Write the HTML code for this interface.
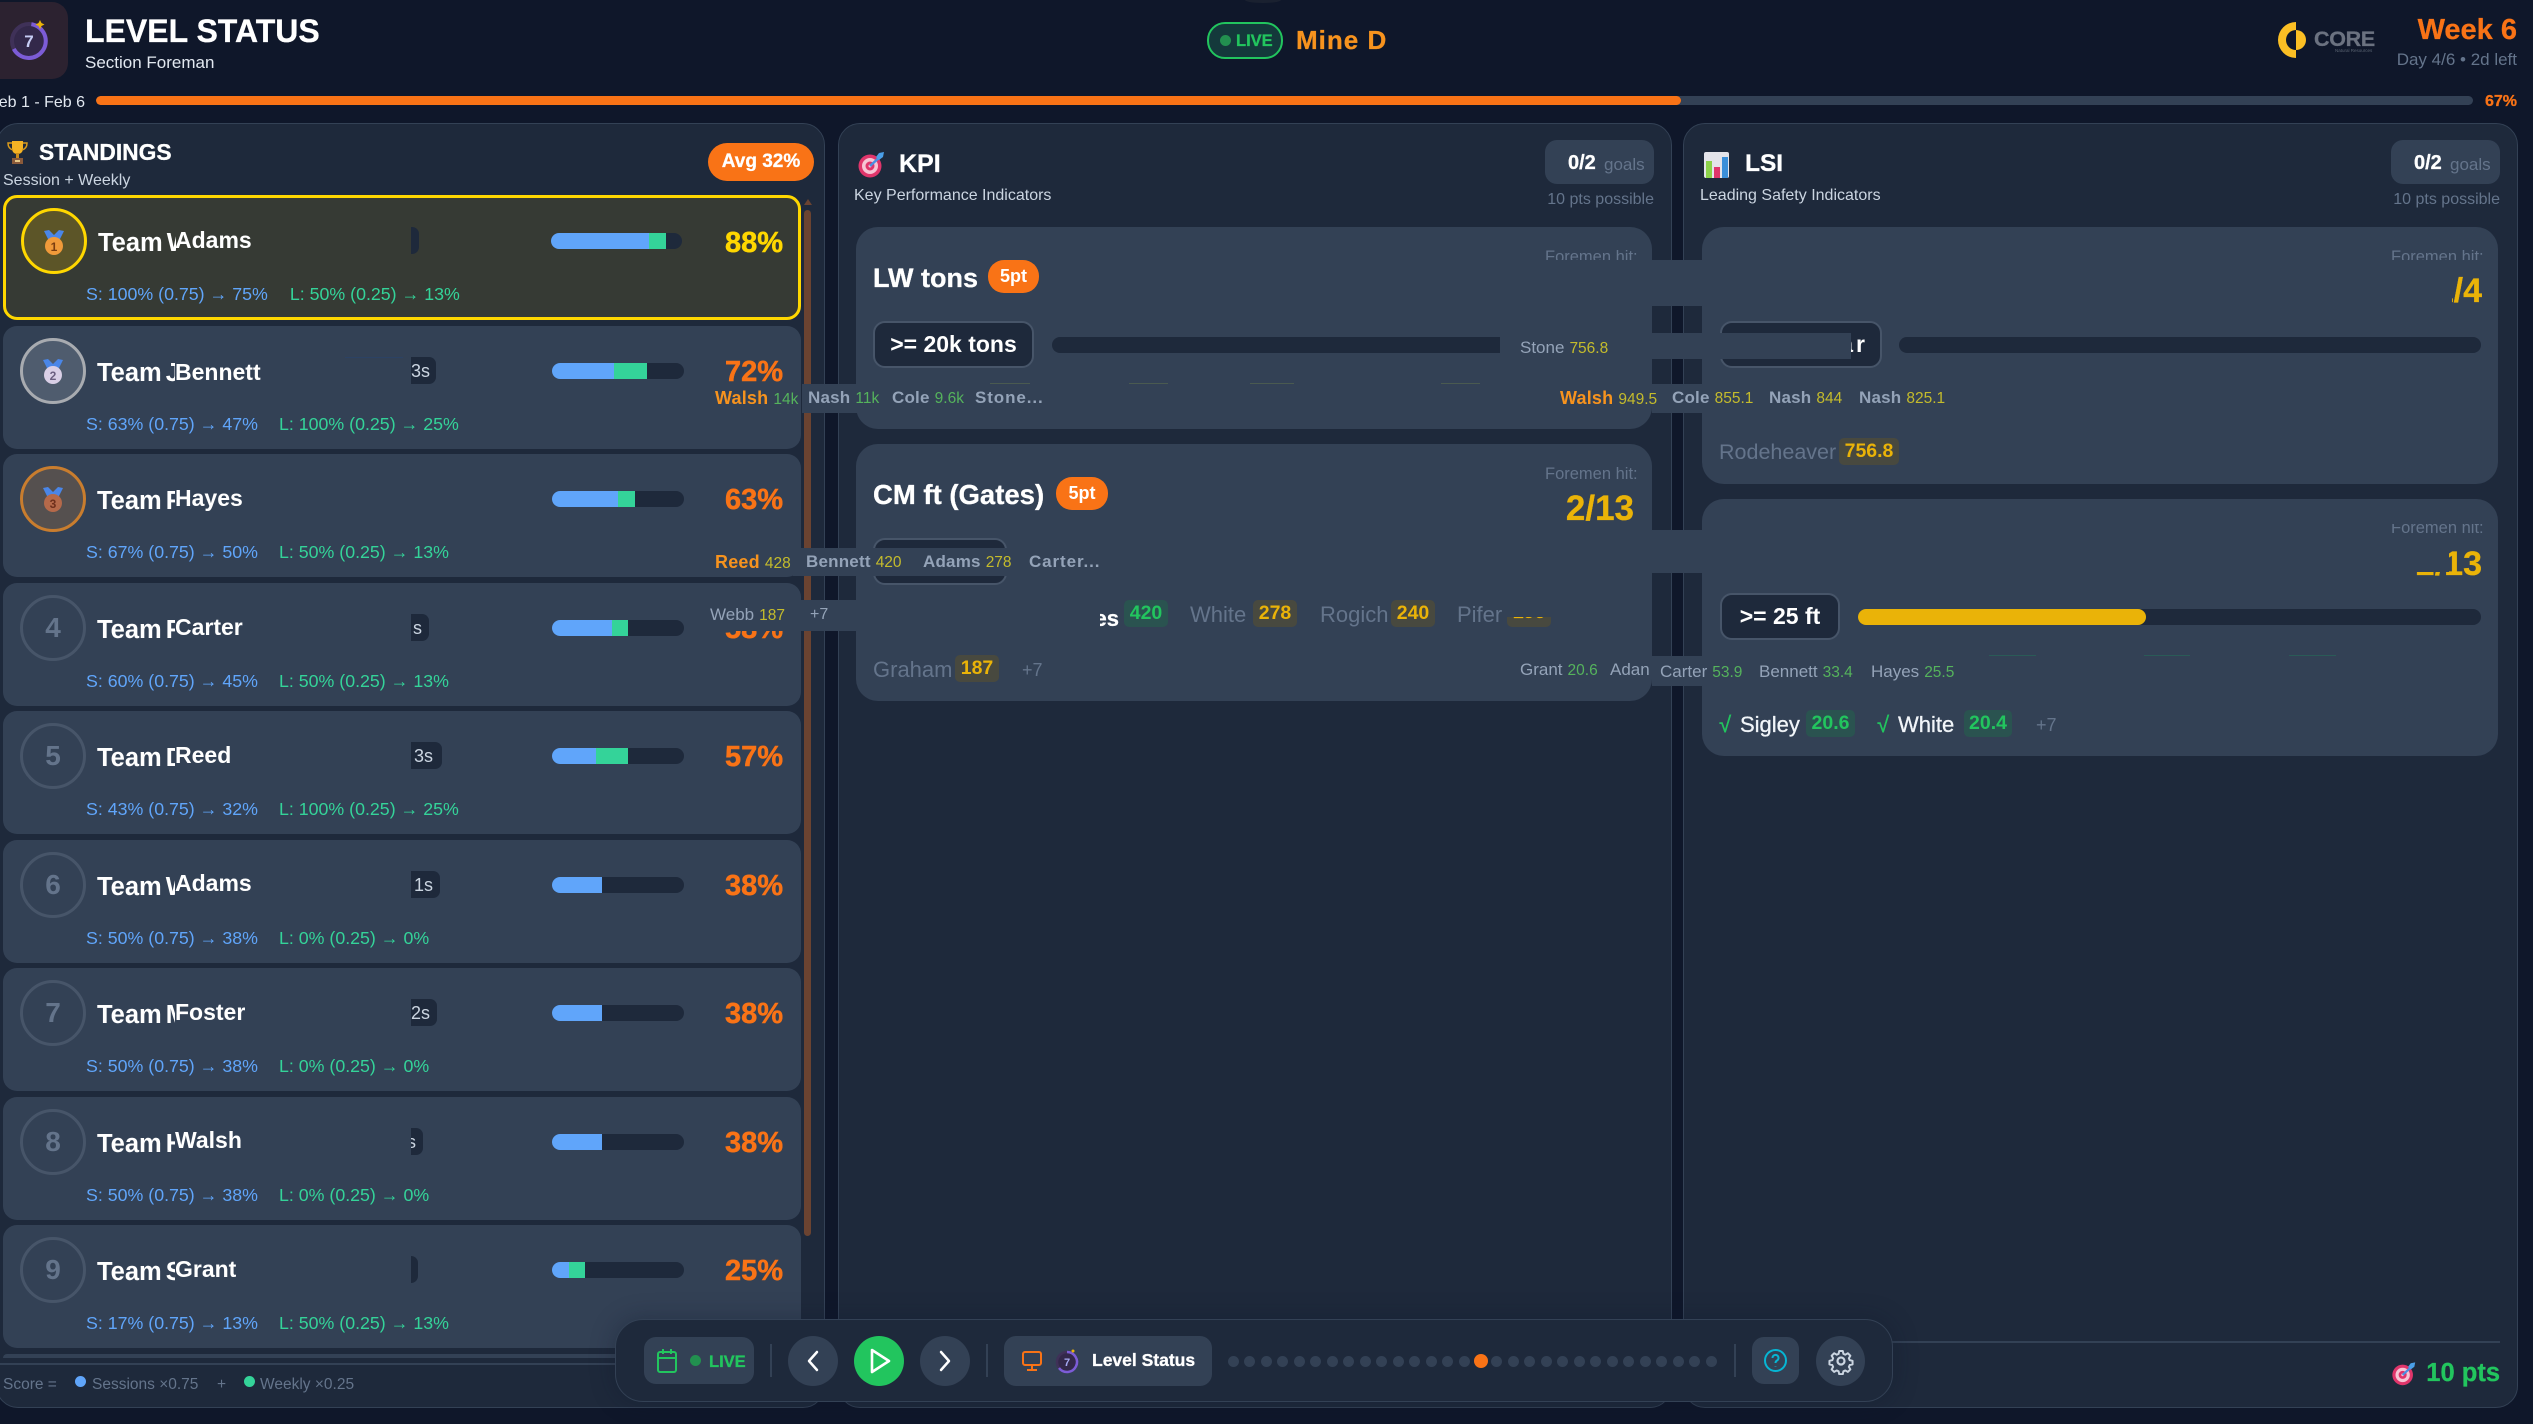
<!DOCTYPE html>
<html><head><meta charset="utf-8"><title>Level Status</title>
<style>
*{box-sizing:border-box;margin:0;padding:0}
html,body{width:2533px;height:1424px;overflow:hidden;background:#0f172a}
body{position:relative;font-family:"Liberation Sans","Noto Sans CJK JP",sans-serif;color:#fff}
.a{position:absolute}
.t{position:absolute;white-space:nowrap;line-height:1}
.b{font-weight:700;-webkit-text-stroke:.3px currentColor}
.panel{position:absolute;background:#1e293b;border:1px solid #334155;border-radius:22px}
.card{position:absolute;background:#334155;border-radius:22px}
.row{position:absolute;left:3px;width:798px;height:123px;background:#334155;border-radius:14px}
.row.g{background:#363a34;border:3px solid #ffd700;top:195px;height:125px}
.c{position:absolute;left:17px;top:12px;width:66px;height:66px;border-radius:50%;border:3px solid #475569;color:#64748b;font-weight:700;font-size:28px;line-height:60px;text-align:center}
.n{position:absolute;left:94px;top:33px;width:78px;height:28px;overflow:hidden;font-size:25.5px;line-height:28px;font-weight:700;white-space:nowrap;word-spacing:-3px}
.o{position:absolute;left:172px;top:31px;font-size:23px;line-height:26px;font-weight:700;white-space:nowrap}
.ch{position:absolute;left:408px;top:31px;height:27px;background:#1e293b;border-radius:0 7px 7px 0;color:#cbd5e1;font-size:18px;line-height:28px;overflow:hidden;white-space:nowrap;text-align:right}
.bar{position:absolute;left:549px;top:37px;width:132px;height:16px;background:#1e293b;border-radius:8px;overflow:hidden}
.bar i{display:block;float:left;height:16px}
.bl{background:#60a5fa}.gr{background:#34d399}
.p{position:absolute;right:18px;top:31px;font-size:29px;line-height:30px;font-weight:700;color:#f97316;-webkit-text-stroke:.5px currentColor}
.d{position:absolute;left:83px;top:88px;font-size:17.8px;line-height:20px;white-space:nowrap;color:#60a5fa}
.d b{font-weight:400;color:#34d399;margin-left:21px}
.th{position:absolute;background:#1e293b;border:2px solid #475569;border-radius:12px;height:47px;font-weight:700;font-size:23px;line-height:43px;text-align:center;white-space:nowrap}
.track{position:absolute;background:#1e293b;height:16px;border-radius:8px}
.pill{position:absolute;background:#f97316;border-radius:16px;width:51px;height:33px;font-weight:700;font-size:18px;line-height:33px;text-align:center}
.goal{position:absolute;background:#334155;border-radius:12px;width:109px;height:44px;top:140px}
.s{position:absolute;background:#334155}
.tag{position:absolute;height:27px;border-radius:5px;background:#48493f;color:#eab308;font-weight:700;font-size:19.5px;line-height:27px;text-align:center}
.tag.v{background:#2a5350;color:#22c55e}
.nm{position:absolute;white-space:nowrap;line-height:1;font-size:22px;color:#64748b}
.f{position:absolute;white-space:nowrap;line-height:1;font-size:17px;letter-spacing:.2px;font-weight:700;color:#94a3b8}
.f u{text-decoration:none;font-weight:400;font-size:15.5px;letter-spacing:0;color:#c4bb2c;margin-left:5px}
.f u.g{color:#55b35c}
.f em{font-style:normal;color:#f7931e;font-size:18px}
.lt{font-weight:400;letter-spacing:0}
.dot{position:absolute;top:1356px;width:11px;height:11px;border-radius:50%;background:#334155}
.btn{position:absolute;top:1336px;width:50px;height:50px;border-radius:50%;background:#334155}
.sep{position:absolute;top:1344px;width:2px;height:33px;background:#334155}
</style></head><body>

<!-- header -->
<div class="a" style="left:1245px;top:-3px;width:36px;height:6px;border-radius:50%;background:#1a2130"></div>
<div class="a" style="left:-20px;top:2px;width:88px;height:77px;background:#2c2230;border-radius:16px"></div>
<svg class="a" style="left:8px;top:20px" width="44" height="44" viewBox="0 0 44 44"><circle cx="21" cy="21" r="17" fill="#33284a" stroke="#3f3158" stroke-width="4"/><path d="M21 4a17 17 0 1 1-14 27" fill="none" stroke="#7c5cd6" stroke-width="4" transform="rotate(8 21 21)"/><text x="21" y="27" font-family="Liberation Sans" font-size="17" font-weight="700" fill="#c7cdf5" text-anchor="middle">7</text><path d="M32 0l1.5 3 3 1.5-3 1.5-1.5 3-1.5-3-3-1.500 3-1.500z" fill="#eab308"/></svg>
<div class="t b" style="left:85px;top:15px;font-size:32px">LEVEL STATUS</div>
<div class="t" style="left:85px;top:54px;font-size:17px;color:#e2e8f0">Section Foreman</div>

<div class="a" style="left:1207px;top:22px;width:76px;height:37px;border:2px solid #22c55e;border-radius:18px;background:#14393b"></div>
<div class="a" style="left:1220px;top:35px;width:11px;height:11px;border-radius:50%;background:#22904f"></div>
<div class="t b" style="left:1236px;top:33px;font-size:16.5px;color:#22c55e">LIVE</div>
<div class="t b" style="left:1296px;top:27px;font-size:26px;color:#f7931e;letter-spacing:1px">Mine D</div>

<svg class="a" style="left:2276px;top:20px" width="32" height="40" viewBox="0 0 32 40"><path d="M20 2a18 18 0 0 0 0 36v-8a10 10 0 0 1 0-20z" fill="#fbbf24"/><path d="M20 10a10 10 0 0 1 0 20z" fill="#fbbf24"/></svg>
<div class="t b" style="left:2314px;top:29px;font-size:21.5px;color:#6b7280;letter-spacing:-.3px">CORE</div>
<div class="t" style="left:2335px;top:49px;font-size:4.5px;color:#5a6472">Natural Resources</div>
<div class="t b" style="right:16px;top:16px;font-size:29px;color:#f97316">Week 6</div>
<div class="t" style="right:16px;top:51px;font-size:17px;color:#64748b">Day 4/6 • 2d left</div>

<div class="t" style="left:-11px;top:95px;font-size:16px;color:#e2e8f0">Feb 1 - Feb 6</div>
<div class="a" style="left:96px;top:96px;width:2377px;height:9px;background:#334155;border-radius:5px;overflow:hidden"><div style="width:1585px;height:9px;background:#f97316;border-radius:5px"></div></div>
<div class="t b" style="left:2485px;top:94px;font-size:16px;color:#f97316">67%</div>

<!-- panels -->
<div class="panel" style="left:-4px;top:123px;width:829px;height:1285px"></div>
<div class="panel" style="left:838px;top:123px;width:834px;height:1285px"></div>
<div class="panel" style="left:1683px;top:123px;width:835px;height:1285px"></div>

<!-- standings header -->
<svg class="a" style="left:7px;top:140px" width="21" height="25" viewBox="0 0 21 25"><path d="M5 1h11v7c0 4-2 6-5.500 6S5 12 5 8z" fill="#f5b324"/><path d="M5 3H1c0 4 1.500 6 5 7M16 3h4c0 4-1.500 6-5 7" fill="none" stroke="#d99a1c" stroke-width="1.500"/><rect x="9" y="13" width="3" height="5" fill="#c98a1a"/><rect x="5" y="18" width="11" height="6" fill="#8a5a3a"/><rect x="8" y="20" width="5" height="2" fill="#e6c98a"/></svg>
<div class="t b" style="left:39px;top:141px;font-size:22.8px">STANDINGS</div>
<div class="t" style="left:3px;top:173px;font-size:16px;color:#cbd5e1">Session + Weekly</div>
<div class="a b" style="left:708px;top:143px;width:106px;height:38px;background:#f97316;border-radius:19px;font-size:19px;line-height:38px;text-align:center">Avg 32%</div>

<!-- rows -->
<div class="row g">
 <div class="c" style="left:15px;top:10px;border-color:#ffd700;background:#5c5528"></div>
 <svg class="a" style="left:37px;top:32px" width="22" height="26" viewBox="0 0 22 26"><path d="M1 1l5-1 5 5 5-5 5 1-5 10H6z" fill="#4a86e8"/><circle cx="11" cy="16" r="9" fill="#f09a3a"/><text x="11" y="21" font-family="Liberation Sans" font-size="12" font-weight="700" fill="#7a3d10" text-anchor="middle">1</text></svg>
 <div class="n" style="left:92px;top:31px">Team Walsh</div><div class="o" style="left:169px;top:29px">Adams</div>
 <div class="ch" style="left:405px;top:29px;width:8px"></div>
 <div class="bar" style="left:545px;top:35px;width:131px"><i class="bl" style="width:98px"></i><i class="gr" style="width:17px"></i></div>
 <div class="p" style="color:#ffd700;top:30px;right:15px">88%</div>
 <div class="d" style="left:80px;top:86px">S: 100% (0.75) → 75%<b style="margin-left:22px">L: 50% (0.25) → 13%</b></div>
</div>
<div class="row" style="top:326px">
 <div class="c" style="border-color:#a8abb0;background:#4f5c6e"></div>
 <svg class="a" style="left:39px;top:33px" width="22" height="26" viewBox="0 0 22 26"><path d="M1 1l5-1 5 5 5-5 5 1-5 10H6z" fill="#4a86e8"/><circle cx="11" cy="16" r="9" fill="#d9cfe6"/><text x="11" y="21" font-family="Liberation Sans" font-size="12" font-weight="700" fill="#6b5f80" text-anchor="middle">2</text></svg>
 <div class="n">Team Jones</div><div class="o" style="top:33px">Bennett</div>
 <div class="a" style="left:342px;top:31px;width:58px;height:1px;background:#2c4264"></div>
 <div class="ch" style="width:25px;padding-right:7px">3s</div>
 <div class="bar"><i class="bl" style="width:62px"></i><i class="gr" style="width:33px"></i></div>
 <div class="p">72%</div>
 <div class="d">S: 63% (0.75) → 47%<b>L: 100% (0.25) → 25%</b></div>
</div>
<div class="row" style="top:454px">
 <div class="c" style="border-color:#c97d2e;background:#55504f"></div>
 <svg class="a" style="left:39px;top:33px" width="22" height="26" viewBox="0 0 22 26"><path d="M1 1l5-1 5 5 5-5 5 1-5 10H6z" fill="#4a86e8"/><circle cx="11" cy="16" r="9" fill="#b5694a"/><text x="11" y="21" font-family="Liberation Sans" font-size="12" font-weight="700" fill="#6e2f1c" text-anchor="middle">3</text></svg>
 <div class="n">Team Ford</div><div class="o">Hayes</div>
 <div class="bar"><i class="bl" style="width:66px"></i><i class="gr" style="width:17px"></i></div>
 <div class="p">63%</div>
 <div class="d">S: 67% (0.75) → 50%<b>L: 50% (0.25) → 13%</b></div>
</div>
<div class="row" style="top:583px">
 <div class="c">4</div>
 <div class="n">Team Ford</div><div class="o">Carter</div>
 <div class="ch" style="width:18px;padding-right:7px">s</div>
 <div class="bar"><i class="bl" style="width:60px"></i><i class="gr" style="width:16px"></i></div>
 <div class="p">58%</div>
 <div class="d">S: 60% (0.75) → 45%<b>L: 50% (0.25) → 13%</b></div>
</div>
<div class="row" style="top:711px">
 <div class="c">5</div>
 <div class="n">Team Dean</div><div class="o">Reed</div>
 <div class="ch" style="width:31px;padding-right:9px">3s</div>
 <div class="bar"><i class="bl" style="width:44px"></i><i class="gr" style="width:32px"></i></div>
 <div class="p">57%</div>
 <div class="d">S: 43% (0.75) → 32%<b>L: 100% (0.25) → 25%</b></div>
</div>
<div class="row" style="top:840px">
 <div class="c">6</div>
 <div class="n">Team Wade</div><div class="o" style="top:30px">Adams</div>
 <div class="ch" style="width:29px;padding-right:7px">1s</div>
 <div class="bar"><i class="bl" style="width:50px"></i></div>
 <div class="p">38%</div>
 <div class="d">S: 50% (0.75) → 38%<b>L: 0% (0.25) → 0%</b></div>
</div>
<div class="row" style="top:968px">
 <div class="c">7</div>
 <div class="n">Team Moss</div><div class="o">Foster</div>
 <div class="ch" style="width:26px;padding-right:8px">2s</div>
 <div class="bar"><i class="bl" style="width:50px"></i></div>
 <div class="p">38%</div>
 <div class="d">S: 50% (0.75) → 38%<b>L: 0% (0.25) → 0%</b></div>
</div>
<div class="row" style="top:1097px">
 <div class="c">8</div>
 <div class="n">Team Hill</div><div class="o" style="top:30px">Walsh</div>
 <div class="ch" style="width:12px;text-indent:-4px;text-align:left">s</div>
 <div class="bar"><i class="bl" style="width:50px"></i></div>
 <div class="p">38%</div>
 <div class="d">S: 50% (0.75) → 38%<b>L: 0% (0.25) → 0%</b></div>
</div>
<div class="row" style="top:1225px">
 <div class="c">9</div>
 <div class="n">Team Shaw</div><div class="o">Grant</div>
 <div class="ch" style="width:7px"></div>
 <div class="bar"><i class="bl" style="width:17px"></i><i class="gr" style="width:16px"></i></div>
 <div class="p">25%</div>
 <div class="d">S: 17% (0.75) → 13%<b>L: 50% (0.25) → 13%</b></div>
</div>
<div class="a" style="left:3px;top:1354px;width:798px;height:4px;background:#334155;border-radius:6px 6px 0 0"></div>

<!-- scrollbar -->
<div class="a" style="left:804px;top:210px;width:7px;height:1026px;background:#6b4331;border-radius:4px"></div>
<div class="a" style="left:804px;top:199px;width:0;height:0;border-left:4px solid transparent;border-right:4px solid transparent;border-bottom:6px solid #6b4331"></div>

<!-- standings footer -->
<div class="a" style="left:0;top:1363px;width:825px;height:2px;background:#334155"></div>
<div class="t" style="left:3px;top:1377px;font-size:15.5px;color:#64748b">Score =</div>
<div class="a" style="left:75px;top:1376px;width:11px;height:11px;border-radius:50%;background:#60a5fa"></div>
<div class="t" style="left:92px;top:1377px;font-size:15.5px;color:#64748b">Sessions ×0.75</div>
<div class="t" style="left:217px;top:1377px;font-size:15.5px;color:#64748b">+</div>
<div class="a" style="left:244px;top:1376px;width:11px;height:11px;border-radius:50%;background:#34d399"></div>
<div class="t" style="left:260px;top:1377px;font-size:15.5px;color:#64748b">Weekly ×0.25</div>

<!-- KPI header -->
<svg class="a" style="left:857px;top:152px" width="29" height="26" viewBox="0 0 29 26"><circle cx="13" cy="14" r="11.500" fill="#e0356b"/><circle cx="13" cy="14" r="8" fill="#f7c4d4"/><circle cx="13" cy="14" r="4.500" fill="#e0356b"/><circle cx="13" cy="14" r="1.500" fill="#f7c4d4"/><path d="M13 14L25 3" stroke="#4a90e2" stroke-width="2.500"/><path d="M22 1l5-1-1 5-4 3-3-3z" fill="#4a9fe8"/></svg>
<div class="t b" style="left:899px;top:152px;font-size:25px">KPI</div>
<div class="t" style="left:854px;top:188px;font-size:16px;color:#cbd5e1">Key Performance Indicators</div>
<div class="goal" style="left:1545px"></div>
<div class="t b" style="left:1568px;top:153px;font-size:20px">0/2</div>
<div class="t" style="left:1604px;top:156px;font-size:17px;color:#64748b">goals</div>
<div class="t" style="right:879px;top:192px;font-size:16px;color:#64748b">10 pts possible</div>

<!-- LSI header -->
<svg class="a" style="left:1704px;top:152px" width="26" height="26" viewBox="0 0 26 26"><rect x="0" y="0" width="25" height="26" rx="2" fill="#e4e4ea"/><rect x="2" y="9" width="6" height="17" fill="#8cd24a"/><rect x="10" y="15" width="6" height="11" fill="#e0356b"/><rect x="18" y="5" width="6" height="21" fill="#3b8fd9"/></svg>
<div class="t b" style="left:1745px;top:152px;font-size:24.5px">LSI</div>
<div class="t" style="left:1700px;top:188px;font-size:16px;color:#cbd5e1">Leading Safety Indicators</div>
<div class="goal" style="left:2391px"></div>
<div class="t b" style="left:2414px;top:153px;font-size:20px">0/2</div>
<div class="t" style="left:2450px;top:156px;font-size:17px;color:#64748b">goals</div>
<div class="t" style="right:33px;top:192px;font-size:16px;color:#64748b">10 pts possible</div>

<!-- KPI card 1 -->
<div class="card" style="left:856px;top:227px;width:796px;height:202px"></div>
<div class="a" style="left:1545px;top:249px;width:95px;height:11px;overflow:hidden"><div class="t" style="top:0;left:0;font-size:16.5px;color:#64748b">Foremen hit:</div></div>
<div class="t b" style="left:873px;top:265px;font-size:27px">LW tons</div>
<div class="pill" style="left:988px;top:260px">5pt</div>
<div class="th" style="left:873px;top:321px;width:161px">&gt;= 20k tons</div>
<div class="track" style="left:1052px;top:337px;width:448px;border-radius:8px 0 0 8px"></div>

<!-- KPI card 2 -->
<div class="card" style="left:856px;top:444px;width:796px;height:257px"></div>
<div class="t" style="left:1545px;top:466px;font-size:16.5px;color:#64748b">Foremen hit:</div>
<div class="t b" style="left:873px;top:481px;font-size:27.5px">CM ft (Gates)</div>
<div class="pill" style="left:1056px;top:477px;width:52px">5pt</div>
<div class="t b" style="right:899px;top:491px;font-size:35px;color:#eab308">2/13</div>
<div class="th" style="left:873px;top:538px;width:134px"></div>
<div class="a" style="left:1100px;top:607px;width:20px;height:22px;overflow:hidden"><div class="t b" style="right:1px;top:1px;font-size:22px">Hayes</div></div>
<div class="tag v" style="left:1124px;top:600px;width:44px">420</div>
<div class="nm" style="left:1190px;top:604px">White</div>
<div class="tag" style="left:1253px;top:600px;width:44px">278</div>
<div class="nm" style="left:1320px;top:604px">Rogich</div>
<div class="tag" style="left:1391px;top:600px;width:44px">240</div>
<div class="nm" style="left:1457px;top:604px">Pifer</div>
<div class="a" style="left:1507px;top:617px;width:44px;height:10px;overflow:hidden;background:#48493f;border-radius:0 0 5px 5px"><div class="t b" style="left:0;width:44px;text-align:center;top:-14px;font-size:19.5px;color:#eab308">196</div></div>
<div class="nm" style="left:873px;top:659px">Graham</div>
<div class="tag" style="left:955px;top:655px;width:44px">187</div>
<div class="t" style="left:1022px;top:661px;font-size:18px;color:#64748b">+7</div>

<!-- LSI card 1 -->
<div class="card" style="left:1702px;top:227px;width:796px;height:257px"></div>
<div class="a" style="left:2391px;top:249px;width:95px;height:11px;overflow:hidden"><div class="t" style="top:0;left:0;font-size:16.5px;color:#64748b">Foremen hit:</div></div>
<div class="a" style="left:2452px;top:274px;width:31px;height:34px;overflow:hidden"><div class="t b" style="right:1px;top:0;font-size:34px;color:#eab308">1/4</div></div>
<div class="th" style="left:1720px;top:321px;width:162px;text-align:right;padding-right:15px">Ne<span style="letter-spacing:3px">a</span>r</div>
<div class="track" style="left:1899px;top:337px;width:582px"></div>
<div class="nm" style="left:1719px;top:442px;font-size:21.5px">Rodeheaver</div>
<div class="tag" style="left:1839px;top:438px;width:60px">756.8</div>

<!-- LSI card 2 -->
<div class="card" style="left:1702px;top:499px;width:796px;height:257px"></div>
<div class="a" style="left:2391px;top:524px;width:95px;height:14px;overflow:hidden"><div class="t" style="top:-4px;left:0;font-size:16.5px;color:#64748b">Foremen hit:</div></div>
<div class="t b" style="right:51px;top:547px;font-size:34px;color:#eab308">2/13</div>
<div class="a" style="left:2405px;top:545px;width:44px;height:27px;background:#334155"></div>
<div class="th" style="left:1720px;top:593px;width:120px">&gt;= 25 ft</div>
<div class="track" style="left:1858px;top:609px;width:623px"><div style="width:288px;height:16px;background:#eab308;border-radius:8px"></div></div>
<div class="t" style="left:1719px;top:714px;font-size:22px;color:#22c55e;-webkit-text-stroke:.4px currentColor">√</div>
<div class="t" style="left:1740px;top:714px;font-size:22px;color:#f1f5f9;-webkit-text-stroke:.3px currentColor">Sigley</div>
<div class="tag v" style="left:1806px;top:710px;width:49px">20.6</div>
<div class="t" style="left:1877px;top:714px;font-size:22px;color:#22c55e;-webkit-text-stroke:.4px currentColor">√</div>
<div class="t" style="left:1898px;top:714px;font-size:22px;color:#f1f5f9;-webkit-text-stroke:.3px currentColor">White</div>
<div class="tag v" style="left:1964px;top:710px;width:48px">20.4</div>
<div class="t" style="left:2036px;top:716px;font-size:18px;color:#64748b">+7</div>

<!-- overflow strips -->
<div class="a" style="left:990px;top:383px;width:40px;height:1px;background:#4a5a50"></div>
<div class="a" style="left:1129px;top:383px;width:39px;height:1px;background:#4a5a50"></div>
<div class="a" style="left:1250px;top:383px;width:44px;height:1px;background:#4a5a50"></div>
<div class="a" style="left:1441px;top:383px;width:39px;height:1px;background:#4a5a50"></div>
<div class="a" style="left:1989px;top:655px;width:47px;height:1px;background:#2a5b57"></div>
<div class="a" style="left:2144px;top:655px;width:46px;height:1px;background:#2a5b57"></div>
<div class="a" style="left:2289px;top:655px;width:47px;height:1px;background:#2a5b57"></div>

<div class="s" style="left:802px;top:384px;width:260px;height:29px"></div>
<div class="f" style="left:715px;top:389px"><em>Walsh</em><u class="g">14k</u></div>
<div class="f" style="left:808px;top:389px">Nash<u class="g">11k</u></div>
<div class="f" style="left:892px;top:389px">Cole<u class="g">9.6k</u></div>
<div class="f" style="left:975px;top:389px;letter-spacing:.9px">Stone...</div>

<div class="s" style="left:1500px;top:333px;width:351px;height:26px"></div>
<div class="s" style="left:1652px;top:260px;width:50px;height:46px"></div>
<div class="f lt" style="left:1520px;top:339px">Stone<u>756.8</u></div>
<div class="s" style="left:1652px;top:384px;width:50px;height:29px"></div>
<div class="f" style="left:1560px;top:389px"><em>Walsh</em><u>949.5</u></div>
<div class="f" style="left:1672px;top:389px">Cole<u>855.1</u></div>
<div class="f" style="left:1769px;top:389px">Nash<u>844</u></div>
<div class="f" style="left:1859px;top:389px">Nash<u>825.1</u></div>

<div class="s" style="left:793px;top:548px;width:320px;height:28px"></div>
<div class="f" style="left:715px;top:553px"><em>Reed</em><u>428</u></div>
<div class="f" style="left:806px;top:553px">Bennett<u>420</u></div>
<div class="f" style="left:923px;top:553px">Adams<u>278</u></div>
<div class="f" style="left:1029px;top:553px;letter-spacing:.9px">Carter...</div>

<div class="s" style="left:696px;top:600px;width:404px;height:31px"></div>
<div class="f lt" style="left:710px;top:606px;color:#94a3b8">Webb<u>187</u></div>
<div class="t" style="left:810px;top:607px;font-size:16px;color:#94a3b8">+7</div>

<div class="s" style="left:1652px;top:530px;width:50px;height:43px"></div>
<div class="f lt" style="left:1520px;top:661px">Grant<u class="g">20.6</u></div>
<div class="f lt" style="left:1610px;top:661px">Adan</div>
<div class="s" style="left:1652px;top:656px;width:50px;height:30px"></div>
<div class="f lt" style="left:1660px;top:663px">Carter<u class="g">53.9</u></div>
<div class="f lt" style="left:1759px;top:663px">Bennett<u class="g">33.4</u></div>
<div class="f lt" style="left:1871px;top:663px">Hayes<u class="g">25.5</u></div>

<!-- LSI footer -->
<div class="a" style="left:1700px;top:1341px;width:800px;height:2px;background:#334155"></div>
<svg class="a" style="left:2391px;top:1361px" width="26" height="26" viewBox="0 0 29 26"><circle cx="13" cy="14" r="11.500" fill="#e0356b"/><circle cx="13" cy="14" r="8" fill="#f7c4d4"/><circle cx="13" cy="14" r="4.500" fill="#e0356b"/><circle cx="13" cy="14" r="1.500" fill="#f7c4d4"/><path d="M13 14L25 3" stroke="#4a90e2" stroke-width="2.500"/><path d="M22 1l5-1-1 5-4 3-3-3z" fill="#4a9fe8"/></svg>
<div class="t b" style="right:33px;top:1361px;font-size:25.5px;color:#22c55e">10 pts</div>

<!-- dock -->
<div class="a" style="left:615px;top:1319px;width:1278px;height:83px;background:#1e293b;border:1px solid #334155;border-radius:28px;box-shadow:0 0 24px rgba(15,23,42,.35)"></div>
<div class="a" style="left:644px;top:1337px;width:110px;height:47px;background:#334155;border-radius:12px"></div>
<svg class="a" style="left:656px;top:1349px" width="22" height="24" viewBox="0 0 22 24" fill="none" stroke="#22c55e" stroke-width="2"><rect x="2" y="3" width="18" height="20" rx="2"/><path d="M2 9h18M7 0v5M15 0v5"/></svg>
<div class="a" style="left:690px;top:1355px;width:11px;height:11px;border-radius:50%;background:#22904f"></div>
<div class="t b" style="left:709px;top:1354px;font-size:16.5px;color:#22c55e">LIVE</div>
<div class="sep" style="left:770px"></div>
<div class="btn" style="left:788px"></div>
<svg class="a" style="left:805px;top:1349px" width="16" height="24" viewBox="0 0 16 24" fill="none" stroke="#fff" stroke-width="2.500" stroke-linecap="round" stroke-linejoin="round"><path d="M12 3L4 12l8 9"/></svg>
<div class="btn" style="left:854px;background:#22c55e"></div>
<svg class="a" style="left:867px;top:1347px" width="26" height="28" viewBox="0 0 26 28" fill="none" stroke="#fff" stroke-width="2.600" stroke-linejoin="round"><path d="M5 3l17 11L5 25z"/></svg>
<div class="btn" style="left:920px"></div>
<svg class="a" style="left:937px;top:1349px" width="16" height="24" viewBox="0 0 16 24" fill="none" stroke="#fff" stroke-width="2.500" stroke-linecap="round" stroke-linejoin="round"><path d="M4 3l8 9-8 9"/></svg>
<div class="sep" style="left:986px"></div>
<div class="a" style="left:1004px;top:1336px;width:208px;height:50px;background:#334155;border-radius:12px"></div>
<svg class="a" style="left:1021px;top:1351px" width="22" height="20" viewBox="0 0 22 20" fill="none" stroke="#f97316" stroke-width="2"><rect x="2" y="1" width="18" height="13" rx="2"/><path d="M11 14v4M6 19h10"/></svg>
<svg class="a" style="left:1055px;top:1349px" width="26" height="26" viewBox="0 0 26 26"><circle cx="12" cy="13" r="10" fill="#33284a" stroke="#3f3158" stroke-width="2.500"/><path d="M12 3a10 10 0 1 1-8 16" fill="none" stroke="#7c5cd6" stroke-width="2.500"/><text x="12" y="17" font-family="Liberation Sans" font-size="11" font-weight="700" fill="#a5a8f0" text-anchor="middle">7</text><circle cx="18" cy="2" r="1.500" fill="#eab308"/></svg>
<div class="t b" style="left:1092px;top:1352px;font-size:17.5px">Level Status</div>

<div class="dot" style="left:1228px"></div><div class="dot" style="left:1244px"></div><div class="dot" style="left:1261px"></div><div class="dot" style="left:1277px"></div><div class="dot" style="left:1294px"></div><div class="dot" style="left:1310px"></div><div class="dot" style="left:1327px"></div><div class="dot" style="left:1343px"></div><div class="dot" style="left:1360px"></div><div class="dot" style="left:1376px"></div><div class="dot" style="left:1393px"></div><div class="dot" style="left:1409px"></div><div class="dot" style="left:1426px"></div><div class="dot" style="left:1442px"></div><div class="dot" style="left:1459px"></div>
<div class="dot" style="left:1474px;top:1354px;width:14px;height:14px;background:#f97316"></div>
<div class="dot" style="left:1491px"></div><div class="dot" style="left:1508px"></div><div class="dot" style="left:1524px"></div><div class="dot" style="left:1541px"></div><div class="dot" style="left:1557px"></div><div class="dot" style="left:1574px"></div><div class="dot" style="left:1590px"></div><div class="dot" style="left:1607px"></div><div class="dot" style="left:1623px"></div><div class="dot" style="left:1640px"></div><div class="dot" style="left:1656px"></div><div class="dot" style="left:1673px"></div><div class="dot" style="left:1689px"></div><div class="dot" style="left:1706px"></div>
<div class="sep" style="left:1734px"></div>
<div class="a" style="left:1752px;top:1337px;width:47px;height:47px;background:#334155;border-radius:12px"></div>
<svg class="a" style="left:1763px;top:1348px" width="25" height="25" viewBox="0 0 25 25" fill="none" stroke="#06b6d4" stroke-width="2"><circle cx="12.500" cy="12.500" r="10.500"/><path d="M9.500 10a3 3 0 1 1 4.500 2.500c-1 .6-1.500 1.200-1.500 2.500M12.500 18v.5"/></svg>
<div class="btn" style="left:1816px;width:49px"></div>
<svg class="a" style="left:1827px;top:1347px" width="28" height="28" viewBox="0 0 24 24" fill="none" stroke="#cbd5e1" stroke-width="1.900" stroke-linejoin="round"><circle cx="12" cy="12" r="3"/><path d="M10.300 2.500h3.400l.6 2.700 1.800.8 2.400-1.400 2.400 2.400-1.400 2.400.8 1.800 2.700.6v3.400l-2.700.6-.8 1.800 1.400 2.400-2.400 2.400-2.400-1.400-1.800.8-.6 2.700h-3.400l-.6-2.700-1.800-.8-2.400 1.400-2.400-2.400 1.400-2.400-.8-1.800-2.700-.6v-3.400l2.700-.6.8-1.800-1.400-2.400 2.400-2.400 2.400 1.400 1.800-.8z" transform="translate(1.200 1.200) scale(.9)"/></svg>
</body></html>
